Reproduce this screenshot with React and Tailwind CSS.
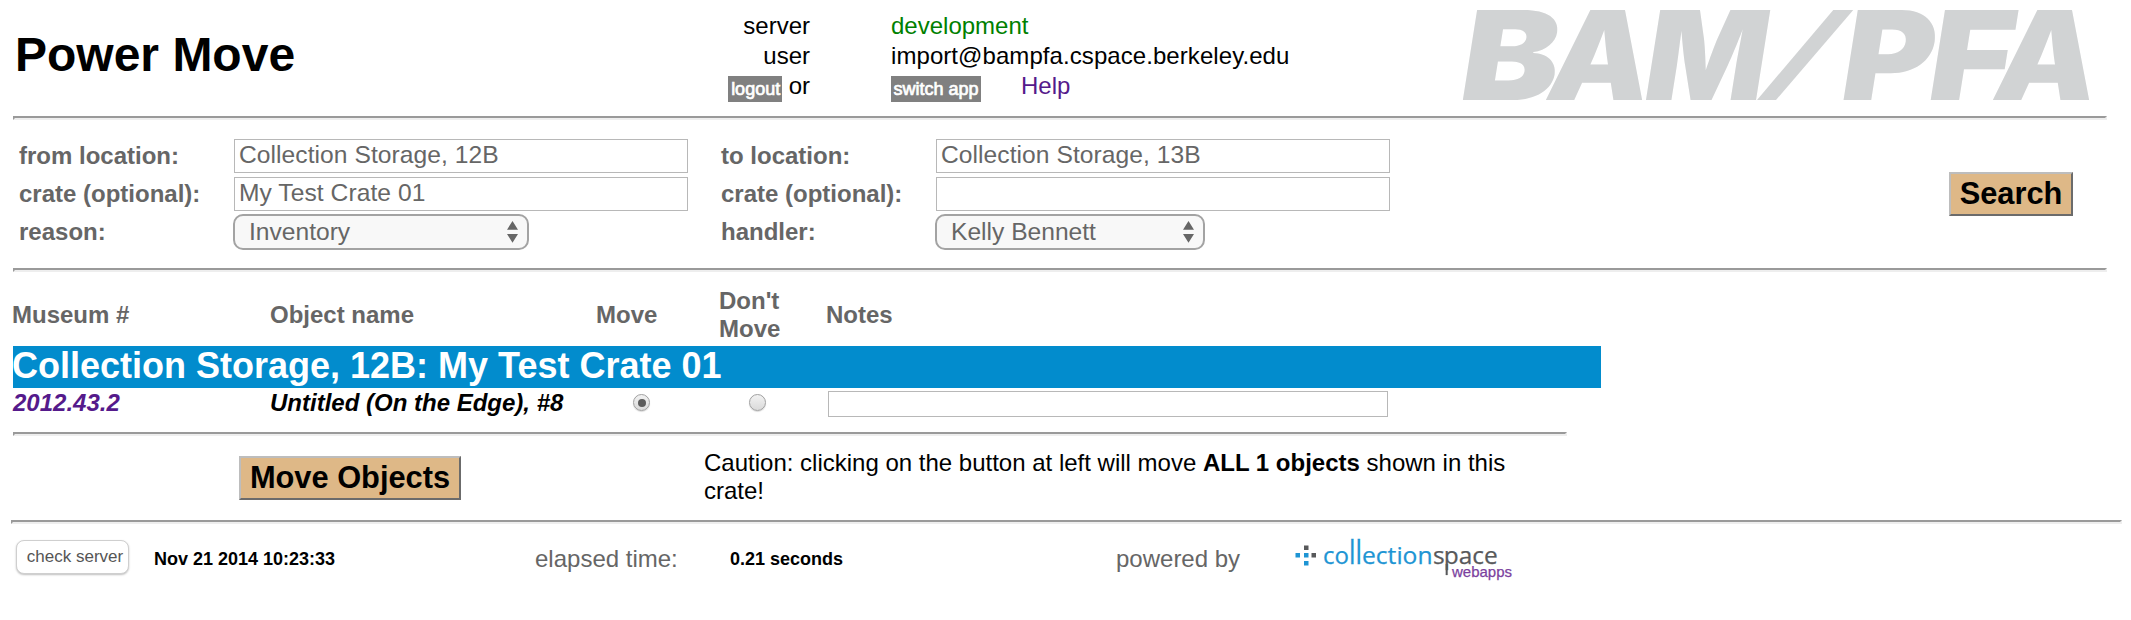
const Rule = ({ className }) => (
  <div className={`h-1 shrink-0 border-2 border-t-[#9a9a9a] border-r-[#eeeeee] border-b-[#eeeeee] border-l-[#9a9a9a] ${className}`} />
);

const Field = ({ label, value }) => (
  <label className="flex h-[38px] items-center">
    <span className="w-[215px] pb-px font-bold">{label}</span>
    <input
      defaultValue={value}
      className="h-[34px] w-[454px] border border-[#b8b8b8] bg-white px-[4px] pb-[2px] text-[24.6px] tracking-[0.06px] outline-none"
    />
  </label>
);

const Choice = ({ label, value, width }) => (
  <div className="flex h-[38px] items-center">
    <span className="w-[214px] pb-px font-bold">{label}</span>
    <button
      className={`flex h-9 items-center justify-between rounded-[10px] border-2 border-[#a3a3a3] bg-[#f8f8f8] pr-[9px] pb-px pl-[14px] text-[24.6px] ${width}`}
    >
      <span>{value}</span>
      <svg width="11" height="22" viewBox="0 0 11 22" fill="#666666">
        <path d="M5.5 0 11 8.7H0ZM0 13h11L5.5 21.7Z" />
      </svg>
    </button>
  </div>
);

const ActionButton = ({ children, className }) => (
  <button
    className={`h-11 border-2 border-t-[#bdbdbd] border-r-[#6b6b6b] border-b-[#6b6b6b] border-l-[#bdbdbd] bg-[#deb887] pb-px text-[30.8px] leading-[38px] font-bold whitespace-nowrap text-black ${className}`}
  >
    {children}
  </button>
);

const TagButton = ({ children, className }) => (
  <button className={`mt-[5px] h-[26px] bg-[#808080] text-[18px] leading-[24px] whitespace-nowrap text-white [-webkit-text-stroke:0.7px_white] ${className}`}>
    {children}
  </button>
);

const Radio = ({ checked }) => (
  <span className="flex size-[17px] items-center justify-center rounded-full border border-[#a0a0a0] bg-linear-to-b from-[#f2f2f2] to-[#dadada] shadow-[0_1px_1px_rgba(0,0,0,0.15)]">
    {checked && <span className="size-2 rounded-full bg-[#5c5c5c]" />}
  </span>
);

const museumLetters = [
  { char: "B", x: -7, width: 98 },
  { char: "A", x: 80, width: 102 },
  { char: "M", x: 177, width: 122 },
  { char: "P", x: 374, width: 92 },
  { char: "F", x: 461, width: 84 },
  { char: "A", x: 527, width: 102 },
];

const MuseumLogo = () => (
  <svg className="overflow-visible" width="628" height="90" viewBox="0 0 628 90" fill="#d1d3d4" fontFamily="Inter, sans-serif" fontWeight="900" fontSize="123.8">
    <g transform="translate(0 90) skewX(-9)">
      {museumLetters.map(({ char, x, width }) => (
        <text key={x} x={x} textLength={width} lengthAdjust="spacingAndGlyphs">{char}</text>
      ))}
      <path d="M294 0h19L376-90h-20Z" />
    </g>
  </svg>
);

const CollectionSpaceLogo = () => (
  <svg className="overflow-visible" width="230" height="56" viewBox="0 0 230 56" fontFamily="'Open Sans', sans-serif" fontSize="24.5">
    <path fill="#1e95d4" d="M5.500 19H10v4.500H5.500ZM14 19h4.500v4.500H14ZM14 27h4.500v4.500H14Z" />
    <path fill="#58595b" d="M14 11.500h4.500V16H14ZM21.500 19H26v4.500h-4.500Z" />
    <g fill="#1e95d4" stroke="#1e95d4" strokeWidth="0.25">
      <text x="33" y="29.500" textLength="26" lengthAdjust="spacingAndGlyphs">co</text>
      <text transform="translate(59 29.500) scale(1 1.370)" textLength="13" lengthAdjust="spacingAndGlyphs">ll</text>
      <text x="72" y="29.500" textLength="70.500" lengthAdjust="spacingAndGlyphs">ection</text>
    </g>
    <g fill="#58595b" stroke="#58595b" strokeWidth="0.250">
      <text x="143" y="29.500">s</text>
      <text x="153.700" y="29.500" textLength="54" lengthAdjust="spacingAndGlyphs">pace</text>
      <path d="M155.800 30h1.800v11h-1.800Z" />
    </g>
    <text x="162" y="43" fill="#7b3f9e" stroke="#7b3f9e" strokeWidth="0.250" fontFamily="'Liberation Sans', Arial, sans-serif" fontSize="15" textLength="60" lengthAdjust="spacingAndGlyphs">webapps</text>
  </svg>
);

export default function App() {
  return (
    <div className="flex h-[620px] w-[2131px] flex-col overflow-hidden bg-white font-['Liberation_Sans',Arial,sans-serif] text-[24px] text-black">
      <header className="flex h-[116px] shrink-0">
        <h1 className="w-[726px] pt-[27px] pl-[15px] text-[48px] leading-[56px] font-bold">Power Move</h1>
        <div className="grid w-[737px] grid-cols-[84px_1fr] content-start gap-x-[81px] pt-[11px] leading-[30px]">
          <span className="text-right">server</span>
          <span className="text-[#008000]">development</span>
          <span className="text-right">user</span>
          <span className="tracking-[0.07px]">import@bampfa.cspace.berkeley.edu</span>
          <div className="flex justify-end gap-[7px]">
            <TagButton className="w-[54px] pl-[2px]">logout</TagButton>
            <span>or</span>
          </div>
          <div className="flex gap-[40px]">
            <TagButton className="w-[90px]">switch app</TagButton>
            <a className="text-[#551a8b]">Help</a>
          </div>
        </div>
        <div className="pt-[10px]">
          <MuseumLogo />
        </div>
      </header>
      <Rule className="ml-[13px] w-[2094px]" />

      <form className="flex h-[148px] shrink-0 pl-[19px] pt-[17px] leading-[28px] text-[#666666]">
        <div className="w-[702px]">
          <Field label="from location:" value="Collection Storage, 12B" />
          <Field label="crate (optional):" value="My Test Crate 01" />
          <Choice label="reason:" value="Inventory" width="w-[296px]" />
        </div>
        <div className="w-[1228px]">
          <Field label="to location:" value="Collection Storage, 13B" />
          <Field label="crate (optional):" value="" />
          <Choice label="handler:" value="Kelly Bennett" width="w-[270px]" />
        </div>
        <ActionButton className="mt-[35px] w-[124px]">Search</ActionButton>
      </form>
      <Rule className="ml-[13px] w-[2094px]" />

      <div className="flex h-[74px] shrink-0 items-center pl-[12px] pt-[12px] leading-[28px] font-bold text-[#666666]">
        <span className="w-[258px]">Museum #</span>
        <span className="w-[326px]">Object name</span>
        <span className="w-[123px]">Move</span>
        <span className="w-[60px] text-center">Don't Move</span>
        <span className="pl-[47px]">Notes</span>
      </div>
      <div className="ml-[13px] h-[42px] w-[1588px] shrink-0 bg-[#028ccd] -indent-px text-[36px] leading-[39px] font-bold text-white">
        Collection Storage, 12B: My Test Crate 01
      </div>
      <div className="flex h-[44px] shrink-0 items-start pl-[13px] leading-[30px] font-bold italic">
        <a className="w-[257px] text-[#551a8b]">2012.43.2</a>
        <span className="w-[363px]">Untitled (On the Edge), #8</span>
        <span className="w-[116px] pt-[6px]"><Radio checked /></span>
        <span className="w-[79px] pt-[6px]"><Radio /></span>
        <input className="mt-[3px] h-[26px] w-[560px] border border-[#b8b8b8] bg-white outline-none" />
      </div>
      <Rule className="ml-[13px] w-[1554px]" />

      <div className="flex h-[84px] shrink-0">
        <ActionButton className="mt-5 ml-[239px] w-[222px]">Move Objects</ActionButton>
        <p className="ml-[243px] w-[830px] pt-[13px] leading-[28px]">
          Caution: clicking on the button at left will move <b>ALL 1 objects</b> shown in this crate!
        </p>
      </div>
      <Rule className="ml-[11px] w-[2111px]" />

      <footer className="flex h-[96px] shrink-0 items-start leading-[30px] text-[#666666]">
        <button className="mt-[16px] ml-[16px] h-[34px] w-[113px] rounded-[8px] border border-[#cfcfcf] bg-white pl-[5px] text-[17px] leading-[30px] whitespace-nowrap text-[#555555] shadow-[0_1px_2px_rgba(0,0,0,0.25)]">check server</button>
        <b className="w-[381px] pt-[20px] pl-[25px] text-[18px] text-black">Nov 21 2014 10:23:33</b>
        <span className="w-[219px] pt-[20px] pl-[25px]">elapsed time:</span>
        <b className="w-[387px] pt-[20px] pl-[1px] text-[18px] text-black">0.21 seconds</b>
        <span className="w-[174px] pt-[20px]">powered by</span>
        <div className="pt-[10px]">
          <CollectionSpaceLogo />
        </div>
      </footer>
    </div>
  );
}
